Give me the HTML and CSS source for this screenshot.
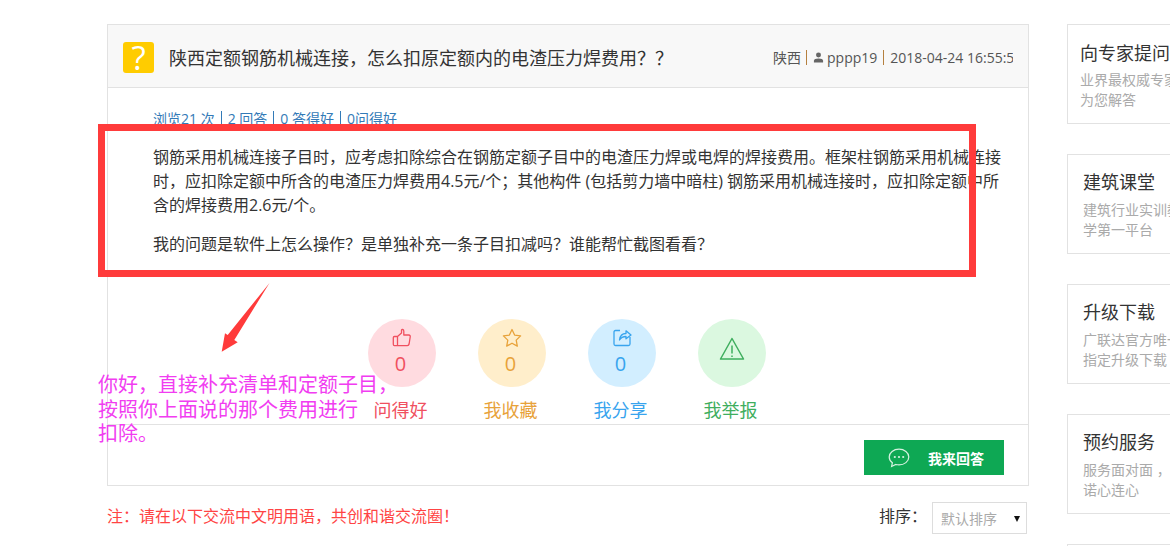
FILE: index.html
```html
<!DOCTYPE html>
<html lang="zh">
<head>
<meta charset="utf-8">
<title>问答</title>
<link rel="stylesheet" href="styles.css">
</head>
<body>
<div class="page">
  <main class="main">
    <section class="card">
      <header class="head">
        <div class="qicon">?</div>
        <h1 class="title">陕西定额钢筋机械连接，怎么扣原定额内的电渣压力焊费用？？</h1>
        <div class="meta"><span class="place">陕西</span><i class="sep"></i><svg class="user" viewBox="0 0 12 12"><circle cx="6" cy="3.2" r="2.7"/><path d="M1 11.5V9.6C1 7.9 3 7 6 7s5 .9 5 2.6v1.900z"/></svg><span>pppp19</span><i class="sep"></i><span>2018-04-24 16:55:55</span></div>
      </header>
      <div class="body">
        <p class="stats">浏览21 次<i class="sep blue"></i>2 回答<i class="sep blue"></i>0 答得好<i class="sep blue"></i>0问得好</p>
        <p class="para">钢筋采用机械连接子目时，应考虑扣除综合在钢筋定额子目中的电渣压力焊或电焊的焊接费用。框架柱钢筋采用机械连接时，应扣除定额中所含的电渣压力焊费用4.5元/个；其他构件 (包括剪力墙中暗柱) 钢筋采用机械连接时，应扣除定额中所含的焊接费用2.6元/个。</p>
        <p class="para second">我的问题是软件上怎么操作？是单独补充一条子目扣减吗？谁能帮忙截图看看？</p>
        <div class="actions">
          <div class="action red">
            <div class="circle">
              <svg class="ico" viewBox="0 0 20 20"><path d="M5.500 8.500 9.500 5V2.200c0-1.200 2.300-1 2.300 1V7h5c1.200 0 1.600 1 1.400 2l-1.100 7c-.2 1-.8 1.600-1.800 1.600H5.500zM5.500 8.500H2.400c-.8 0-1.100.5-1.100 1.300v6.500c0 .8.300 1.300 1.100 1.300h3.100"/></svg>
              <span class="num">0</span>
            </div>
            <div class="label">问得好</div>
          </div>
          <div class="action orange">
            <div class="circle">
              <svg class="ico" viewBox="0 0 20 20"><path d="M10 1.500l2.600 5.600 6 .8-4.400 4.200 1.100 6L10 15.200l-5.300 2.900 1.100-6L1.400 7.900l6-.8z"/></svg>
              <span class="num">0</span>
            </div>
            <div class="label">我收藏</div>
          </div>
          <div class="action blue">
            <div class="circle">
              <svg class="ico" viewBox="0 0 20 20"><path d="M8 2.500H3.500c-1 0-1.500.5-1.500 1.500v12c0 1 .5 1.500 1.500 1.500h13c1 0 1.500-.5 1.500-1.500V9M7.500 12c.5-4 3-6.500 6.500-6.500V2.800L19 7l-5 3.800V8.500c-2.500 0-5 1-6.500 3.500z"/></svg>
              <span class="num">0</span>
            </div>
            <div class="label">我分享</div>
          </div>
          <div class="action green">
            <div class="circle solo">
              <svg class="ico big" viewBox="0 0 26 24"><path d="M13 1.500 1.500 22h23zM13 8.500v8M13 18.500v1.500"/></svg>
            </div>
            <div class="label">我举报</div>
          </div>
        </div>
      </div>
      <footer class="foot">
        <button class="reply">
          <svg class="chat" viewBox="0 0 22 20"><path d="M11 1.200C5.600 1.200 1.200 4.700 1.200 9c0 2.300 1.200 4.300 3.200 5.700L3.600 18.500l4.200-2c1 .2 2.100.4 3.200.4 5.400 0 9.800-3.500 9.800-7.900S16.400 1.200 11 1.200z"/><circle class="dot" cx="6.800" cy="9" r="1.100"/><circle class="dot" cx="11" cy="9" r="1.100"/><circle class="dot" cx="15.200" cy="9" r="1.100"/></svg>
          <span>我来回答</span>
        </button>
      </footer>
    </section>
    <div class="bar">
      <p class="notice">注：请在以下交流中文明用语，共创和谐交流圈！</p>
      <div class="sort">
        <span class="sort-label">排序：</span>
        <div class="select">默认排序<i class="caret"></i></div>
      </div>
    </div>
  </main>
  <aside class="side">
    <div class="box first"><h3>向专家提问</h3><p>业界最权威专家团队在线<br>为您解答</p></div>
    <div class="box"><h3>建筑课堂</h3><p>建筑行业实训教育<br>学第一平台</p></div>
    <div class="box"><h3>升级下载</h3><p>广联达官方唯一正版<br>指定升级下载</p></div>
    <div class="box"><h3>预约服务</h3><p>服务面对面 ，承诺<br>诺心连心</p></div>
    <div class="box"></div>
  </aside>

  <div class="mark-rect"></div>
  <svg class="mark-arrow" viewBox="0 0 49 70"><path d="M48.500 0 13.300 57 16.700 59.300 .7 68.700 4 50.300 6.700 52z" fill="#ff3b3b"/></svg>
  <div class="mark-text">你好，直接补充清单和定额子目，<br>按照你上面说的那个费用进行<br>扣除。</div>
</div>
</body>
</html>
```

FILE: styles.css
```css
* { box-sizing: border-box; }
html, body { margin: 0; height: 546px; overflow: hidden; background: #fff; }
body { font-family: "Open Sans", "Noto Sans CJK SC", sans-serif; color: #333; }
.page { position: relative; display: flex; gap: 38px; width: 1170px; height: 546px; padding: 24px 0 0 107px; overflow: hidden; }
.main { width: 922px; flex: none; }
.card { border: 1px solid #e2e2e2; height: 462px; display: flex; flex-direction: column; }
.head { height: 63px; flex: none; display: flex; align-items: center; padding: 2px 15px 0 15px; background: #f8f8f8; border-bottom: 1px solid #e2e2e2; }
.qicon { width: 31px; height: 31px; border-radius: 3px; background: #fc0; color: #fff; font: 400 33px/31px "Open Sans", sans-serif; text-align: center; flex: none; margin-right: 15px; }
.title { margin: 2px 0 0; font-size: 18px; font-weight: 400; line-height: 28px; white-space: nowrap; color: #333; flex: 1; }
.meta { width: 240px; flex: none; overflow: hidden; white-space: nowrap; font-size: 14px; color: #555; display: flex; align-items: center; gap: 6px; }
.meta > * { flex: none; }
.place { margin-right: -1px; }
.sep { display: inline-block; width: 1px; height: 15px; background: #b5803f; }
.sep.blue { background: #337ab7; vertical-align: -2px; margin: 0 6px; }
.user { width: 11px; height: 11px; fill: #666; margin-right: -3px; }
.body { flex: 1; padding: 20px 26px 0 45px; }
.stats { margin: 0; font-size: 14px; line-height: 22px; color: #337ab7; white-space: nowrap; }
.para { margin: 15px 0 0; font-size: 16px; line-height: 24px; color: #333; }
.para.second { margin-top: 15px; }
.actions { display: flex; margin: 63px 0 0 215px; gap: 42px; }
.action { width: 68px; display: flex; flex-direction: column; align-items: center; }
.circle { width: 68px; height: 68px; border-radius: 50%; display: flex; flex-direction: column; align-items: center; padding-top: 9px; }
.circle.solo { padding-top: 18px; }
.ico { width: 20px; height: 20px; fill: none; stroke: currentColor; stroke-width: 1.300; stroke-linejoin: round; }
.ico.big { width: 26px; height: 24px; stroke-width: 1.500; }
.num { font-size: 20px; line-height: 28px; margin-top: 2px; padding-right: 3px; }
.label { font-size: 18px; line-height: 24px; margin-top: 11px; padding-right: 3px; white-space: nowrap; }
.red { color: #f0505f; } .red .circle { background: #ffdbe0; }
.orange { color: #e8a23a; } .orange .circle { background: #ffeecb; }
.blue { color: #38a4ee; } .blue .circle { background: #d2eeff; }
.green { color: #3fae5e; } .green .circle { background: #dbf8e0; }
.foot { height: 61px; flex: none; border-top: 1px solid #e2e2e2; display: flex; justify-content: flex-end; align-items: flex-start; padding: 15px 24px 0 0; }
.reply { width: 140px; height: 35px; border: 0; background: #0ea854; color: #fff; font: 700 14px "Noto Sans CJK SC", sans-serif; display: flex; align-items: center; padding: 0 0 0 24px; }
.reply span { margin-left: 18px; }
.chat { width: 22px; height: 20px; fill: none; stroke: #d6f2e0; stroke-width: 1.200; }
.chat .dot { fill: #d6f2e0; stroke: none; }
.bar { display: flex; justify-content: space-between; align-items: flex-start; padding: 16px 2px 0 0; }
.notice { margin: 0; font-size: 16px; line-height: 28px; color: #f44; }
.sort { display: flex; align-items: flex-start; gap: 5px; font-size: 16px; line-height: 28px; color: #333; }
.select { position: relative; width: 95px; height: 32px; border: 1px solid #ddd; font-size: 14px; line-height: 32px; color: #aaa; padding-left: 8px; }
.caret { position: absolute; right: 6px; top: 13px; border: 3px solid transparent; border-top: 6px solid #111; border-bottom: 0; }
.side { flex: none; width: 200px; display: flex; flex-direction: column; gap: 30px; }
.box { height: 100px; flex: none; border: 1px solid #e2e2e2; border-right: 0; padding: 14px 0 0 15px; white-space: nowrap; }
.box.first { padding: 15px 0 0 12px; }
.box.first p { margin-top: 4px; }
.box h3 { margin: 0; font-size: 18px; font-weight: 400; line-height: 26px; color: #333; }
.box p { margin: 5px 0 0; font-size: 14px; line-height: 20px; color: #aaa; }
.mark-rect { position: absolute; left: 98px; top: 124px; width: 878px; height: 153px; border: 7px solid #ff3b3b; }
.mark-arrow { position: absolute; left: 221px; top: 283px; width: 49px; height: 70px; }
.mark-text { position: absolute; left: 98px; top: 373px; font-size: 20px; line-height: 24.500px; color: #f13df1; white-space: nowrap; }
```
